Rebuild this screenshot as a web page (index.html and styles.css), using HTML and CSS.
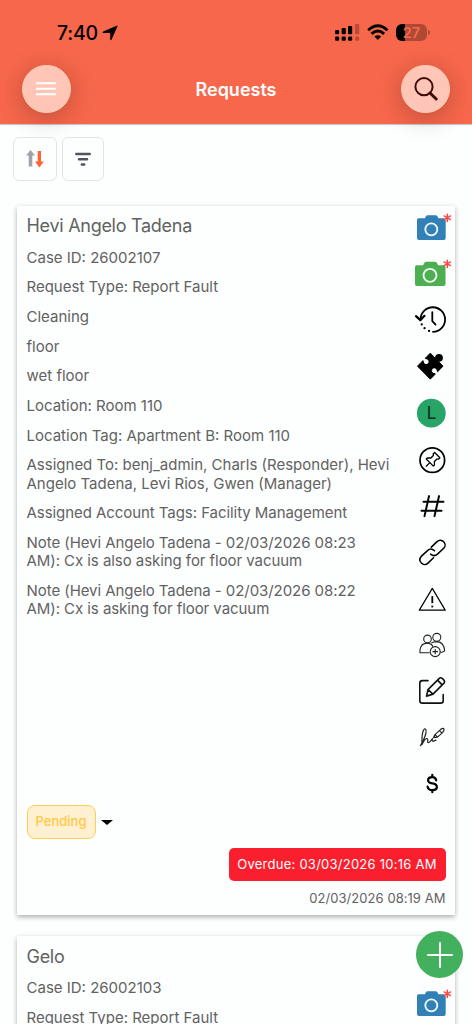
FILE: index.html
```html
<!DOCTYPE html>
<html lang="en">
<head>
<meta charset="utf-8">
<meta name="viewport" content="width=device-width, initial-scale=1">
<title>Requests</title>
<link rel="stylesheet" href="styles.css">
</head>
<body>
<svg width="0" height="0" class="defs" aria-hidden="true">
  <defs>
    <g id="asterisk" stroke="#fb4a45" stroke-width="1.5" stroke-linecap="round">
      <path d="M0-3.6V3.6M-3.2-1.9L3.2 1.9M3.2-1.9L-3.2 1.9"/>
    </g>
    <g id="camera-blue">
      <path d="M-13.3-10H-7.2L-6-12Q-5.500-13-4.300-13H3.700Q4.900-13 5.400-12L6.500-10H11.700Q13.700-10 13.700-8V9.800Q13.700 11.800 11.700 11.800H-13Q-15 11.800-15 9.800V-8.300Q-15-10-13.300-10Z" fill="#3180b6"/>
      <circle cx="-.7" cy="1.200" r="6" fill="none" stroke="#f2f9fd" stroke-width="1.800"/>
      <use href="#asterisk" x="15.300" y="-10.300"/>
    </g>
  </defs>
</svg>
<div class="screen">
  <header class="header">
    <div class="status">
      <div class="clock"><span>7:40</span>
        <svg width="16" height="16" viewBox="0 0 16 16"><path d="M14.600.7Q15.800.3 15.400 1.500L9.600 14.600Q8.800 15.900 8.200 14.500V8.400Q8.200 7.900 7.700 7.900H1.300Q-.3 7.300 1.200 6.500Z"/></svg>
      </div>
      <div class="signals">
        <svg width="25" height="18" viewBox="0 0 25 18"><g><rect x="0" y="6" width="4.200" height="4.300" rx="1"/><rect x="6.600" y="4" width="4.200" height="6.300" rx="1"/><rect x="13" y="2" width="4.200" height="8.300" rx="1"/><rect x="0" y="12.500" width="4.200" height="4.300" rx="1.200"/><rect x="6.600" y="12.500" width="4.200" height="4.300" rx="1.200"/><rect x="13" y="12.500" width="4.200" height="4.300" rx="1.200"/></g><g opacity=".25"><rect x="20" y="0" width="4.200" height="10.300" rx="1"/><rect x="20" y="12.500" width="4.200" height="4.300" rx="1.200"/></g></svg>
        <svg width="22" height="17" viewBox="0 0 22 17"><g fill="none" stroke="#000" stroke-width="2.900"><path d="M1.200 6.200Q10.800-2.600 20.400 6.200"/><path d="M4.500 9.800Q10.800 4.200 17.100 9.800"/></g><path d="M7.400 12.600Q10.800 9.800 14.200 12.600L10.800 16Z"/></svg>
        <div class="battery"><span>27</span></div>
      </div>
    </div>
    <div class="bar">
      <button class="round" aria-label="Menu"><svg width="20" height="14" viewBox="0 0 20 14" stroke="#fff" stroke-width="2"><path d="M0 1.200H20M0 6.700H20M0 12.300H20"/></svg></button>
      <h1>Requests</h1>
      <button class="round" aria-label="Search"><svg width="26" height="26" viewBox="0 0 26 26" fill="none" stroke="#3c0c08"><circle cx="11" cy="10.700" r="8.600" stroke-width="2"/><path d="M17 17L23.200 23" stroke-width="3" stroke-linecap="round"/></svg></button>
    </div>
  </header>
  <main>
    <div class="tools">
      <button class="tool sort" aria-label="Sort"><svg width="18" height="18" viewBox="0 0 18 18"><path d="M4.500 0L9 5.500H6.300V16.500H2.700V5.500H0Z" fill="#a0a2a8"/><path d="M11.700 1H15V11.500H17.800L13.400 17.600 9 11.500H11.700Z" fill="#ff6433"/></svg></button>
      <button class="tool" aria-label="Filter"><svg width="16" height="15" viewBox="0 0 16 15" fill="none" stroke="#50545d" stroke-width="2.500" stroke-linecap="round"><path d="M1.300 2H14.700M4 7.300H12M6.800 12.500H9.200"/></svg></button>
    </div>

    <article class="card">
      <div class="content">
        <div class="details">
          <h2>Hevi Angelo Tadena</h2>
          <p>Case ID: 26002107</p>
          <p>Request Type: Report Fault</p>
          <p>Cleaning</p>
          <p>floor</p>
          <p>wet floor</p>
          <p>Location: Room 110</p>
          <p>Location Tag: Apartment B: Room 110</p>
          <p>Assigned To: benj_admin, Charls (Responder), Hevi<br>Angelo Tadena, Levi Rios, Gwen (Manager)</p>
          <p class="snug">Assigned Account Tags: Facility Management</p>
          <p class="snug">Note (Hevi Angelo Tadena - 02/03/2026 08:23<br>AM): Cx is also asking for floor vacuum</p>
          <p class="snug">Note (Hevi Angelo Tadena - 02/03/2026 08:22<br>AM): Cx is asking for floor vacuum</p>
        </div>
        <div class="rail">
          <svg viewBox="-24 -23 48 46"><use href="#camera-blue"/></svg>
          <svg viewBox="-24 -23 48 46"><path d="M-15.300-8.800H-9L-7.500-11.300Q-7-12.300-5.800-12.300H3Q4.200-12.300 4.800-11.300L6.200-8.800H11.500Q13.500-8.800 13.500-6.800V9.800Q13.500 11.800 11.500 11.800H-15Q-17 11.800-17 9.800V-7Q-17-8.800-15.300-8.800Z" fill="#4caf50"/><circle cx="-2" cy="1.200" r="6.500" fill="none" stroke="#f2f9f2" stroke-width="1.900"/><use href="#asterisk" x="15.300" y="-10.300"/></svg>
          <svg viewBox="-24 -23 48 46" fill="none" stroke="#000" stroke-width="1.800" stroke-linecap="round" stroke-linejoin="round"><path d="M-11.500-1A12.300 12.300 0 1 1 1 11.700"/><path d="M-16-4L-11.700 0-7.500-4.300" stroke-width="2.200"/><path d="M.3-8V1L3.600 4.500"/><path d="M-3 10.800h.1M-7.500 8h.1M-10.300 4.300h.1" stroke-width="2.200"/></svg>
          <svg viewBox="-24 -23 48 46"><path d="M-14.500 0L-1.700-13 11 0-1.700 13Z" stroke="#000" stroke-linejoin="round"/><circle cx="7" cy="-8.300" r="3.900"/><path d="M2-4L6-8" stroke="#000" stroke-width="4"/><g fill="#fdfefe" stroke="#fdfefe"><circle cx="-5.800" cy="-4.500" r="2"/><path d="M-10-8.700L-6-4.700" stroke-width="2.600"/><circle cx="2.300" cy="4.500" r="2"/><path d="M2.300 4.500L6.500 8.700" stroke-width="2.600"/></g></svg>
          <svg viewBox="-24 -23 48 46"><circle cx="-.7" cy="0" r="14.400" fill="#27a566"/><text x="-.5" y="6" text-anchor="middle" class="initial">L</text></svg>
          <svg viewBox="-24 -23 48 46" fill="none" stroke="#000" stroke-width="1.300" stroke-linejoin="round"><circle cx=".3" cy="1" r="12.300" stroke-width="1.700"/><g transform="translate(.3 1) rotate(45)"><path d="M-3.700-7H3.700V-5L2.500-4V-.5L5 2V3.500H-5V2L-2.500-.5V-4L-3.700-5ZM0 3.500V9"/></g></svg>
          <svg viewBox="-24 -23 48 46" fill="none" stroke="#000" stroke-width="2" stroke-linecap="round"><path d="M-3-9L-7.500 11M7-9L2.500 11M-8.500-3.500H11.500M-10.500 5.500H9.500"/></svg>
          <svg viewBox="-24 -23 48 46" fill="none" stroke="#000" stroke-width="1.500" stroke-linecap="round"><path d="M-.7-4L5-9.500C9.500-14 16-7 11.700-2.800L5.500 3Q2 6-1.400 3M2.500-.3Q-1-3.800-4.500-.5L-10.500 5C-15 10-8.500 16.200-4 12L1.500 6.700"/></svg>
          <svg viewBox="-24 -23 48 46" fill="none" stroke="#000" stroke-width="1.200" stroke-linejoin="round"><path d="M.3-9.700L13.200 12H-12.700Z"/><path d="M.3-2V5" stroke-width="1.800"/><path d="M.3 7.500V9.300" stroke-width="1.800"/></svg>
          <svg viewBox="-24 -23 48 46" fill="none" stroke="#222" stroke-width="1.100"><circle cx="-4.500" cy="-5.200" r="3.800"/><circle cx="4.800" cy="-6.800" r="4"/><path d="M-2.500 8.600H-12V5.500Q-11-1-4.700-1 -1 -1 1 2.500M-.8-1Q1-2.500 5-2.500 12-2 12.700 6.800 11 8.300 8.300 8.300"/><circle cx="3.200" cy="7.500" r="5" fill="#fdfefe"/><path d="M3.200 4.800V10.200M.5 7.500H5.900"/></svg>
          <svg viewBox="-24 -23 48 46" fill="none" stroke="#111" stroke-width="1.600" stroke-linejoin="round" stroke-linecap="round"><path d="M-4-9.500H-9.500Q-12.200-9.500-12.200-7V10.500Q-12.200 13-9.500 13H8.500Q11.200 13 11.200 10.500V4.500"/><path d="M-5.500 6L-4-.5 7.300-11.800Q8.700-13 10.500-11.500L11.700-10.300Q13.300-8.500 12-7L1 4ZM-4-.5L1 4M5.500-10L10.200-5.300"/></svg>
          <svg viewBox="-24 -23 48 46" fill="none" stroke="#222" stroke-width="1.200" stroke-linecap="round" stroke-linejoin="round"><path d="M-11.500 9.500C-8 4-4.500-5-6.500-7-8.500-8.500-10.500-3-10 8.500-8.500 5-6.500 2-5 2.500-3 3-5.500 6.500-3.500 6.500-2 6.500-1 4 .5 2.500 0 4 0 5.500 1.500 5L4 4M1.500 1.500L3-1.500 9-7Q11.500-8.500 12-7 12.300-5.500 10.500-3.500L5.500 1ZM3-1.500L5.500 1M7.500-5.500L10-3"/></svg>
          <svg viewBox="-24 -23 48 46" fill="none" stroke="#000" stroke-width="2.200" stroke-linecap="round"><path d="M4.200-2.800Q3.500-6 .3-6 -3.900-6-3.900-3 -3.900-.4 .3.300 4.900 1 4.900 4 4.700 7 .5 7 -3.900 7-4.400 3.500M.3-8.300V-6.500M.3 7.500V9"/></svg>
        </div>
      </div>
      <div class="state"><span class="pill">Pending</span><i class="caret"></i></div>
      <div class="overdue">Overdue: 03/03/2026 10:16 AM</div>
      <div class="date">02/03/2026 08:19 AM</div>
    </article>

    <article class="card">
      <div class="content">
        <div class="details">
          <h2>Gelo</h2>
          <p>Case ID: 26002103</p>
          <p>Request Type: Report Fault</p>
        </div>
        <div class="rail">
          <svg viewBox="-24 -23 48 46"></svg>
          <svg viewBox="-24 -23 48 46"><use href="#camera-blue"/></svg>
        </div>
      </div>
    </article>
  </main>
  <button class="add" aria-label="Add"><svg width="26" height="26" viewBox="0 0 26 26" stroke="#fff" stroke-width="2" stroke-linecap="round"><path d="M13 1V25M1 13H25"/></svg></button>
</div>
</body>
</html>
```
FILE: styles.css
```css
* { box-sizing: border-box; }
body {
  margin: 0;
  font-family: Inter, "Liberation Sans", sans-serif;
  color: #626262;
  background: #fdfefe;
}
button { border: 0; padding: 0; font: inherit; }
svg { display: block; flex: none; }
.defs { position: absolute; }
.screen { position: relative; height: 1024px; overflow: hidden; }

.header {
  height: 124px;
  background: #f7674b;
  box-shadow: 0 1px 1px rgba(0, 0, 0, .2);
}
.status {
  height: 65px;
  padding: 0 42px 0 57px;
  display: flex;
  align-items: center;
  justify-content: space-between;
  color: #000;
}
.clock { display: flex; align-items: center; gap: 4px; font-size: 19.500px; font-weight: 500; letter-spacing: -.2px; }
.signals { display: flex; align-items: center; gap: 7px; }
.battery {
  position: relative;
  width: 31px;
  height: 17px;
  margin-right: 3px;
  border-radius: 6px;
  background: linear-gradient(90deg, #000 8.500px, #ae4936 8.500px);
  color: #f7674b;
  font-size: 14.500px;
  font-weight: 600;
  line-height: 17px;
  text-align: center;
}
.battery::after {
  content: "";
  position: absolute;
  left: 32px;
  top: 6px;
  width: 2px;
  height: 5px;
  border-radius: 0 2px 2px 0;
  background: #ae4936;
}
.bar { padding: 0 22px; display: flex; align-items: center; justify-content: space-between; height: 48px; }
.bar h1 { margin: 0; font-size: 18px; font-weight: 600; color: #fff; }
.round {
  width: 48.500px;
  height: 48.500px;
  border-radius: 50%;
  display: flex;
  align-items: center;
  justify-content: center;
  background: #ffc5b7;
  border: 1px solid #fbcdb2;
  box-shadow: 0 5px 26px rgba(0, 0, 0, .23);
}

.tools { display: flex; gap: 5px; padding: 13px 0 0 13px; }
.tool {
  width: 41.500px;
  height: 44px;
  display: flex;
  align-items: center;
  justify-content: center;
  border: 1.500px solid #e3e4e5;
  border-radius: 6px;
  background: #fdfefe;
}
.tool.sort { width: 44px; }

.card {
  height: 709px;
  margin: 24.500px 17.500px 0 17px;
  background: #fdfefe;
  box-shadow: 0 2px 5px rgba(0, 0, 0, .32);
}
.card + .card { margin-top: 21.500px; }
.content { display: flex; justify-content: space-between; height: 600px; padding-left: 9.500px; }
.details { padding-top: 9.500px; white-space: nowrap; }
.details h2 { margin: 0 0 11.500px; font-size: 18px; letter-spacing: -.28px; line-height: 22px; font-weight: 400; }
.details p { margin: 0 0 11.500px; font-size: 15px; line-height: 18.200px; }
.details .snug { letter-spacing: -.06px; }
.rail { width: 46.500px; display: flex; flex-direction: column; margin-top: -1px; }
.rail svg { width: 48px; height: 46.250px; overflow: visible; }
.initial { font-size: 17px; fill: #06291a; }

.state { display: flex; align-items: center; gap: 5px; padding-left: 9.500px; height: 33px; }
.pill {
  width: 69px;
  height: 33.500px;
  line-height: 31px;
  text-align: center;
  border: 1.500px solid #ffd152;
  border-radius: 8px;
  background: #fff0d2;
  color: #ffc941;
  font-size: 13px;
  font-weight: 500;
}
.caret { border: 6px solid transparent; border-top: 5px solid #000; border-bottom: 0; }
.overdue {
  width: 217px;
  height: 33px;
  margin: 9px 9px 0 auto;
  border-radius: 5px;
  background: #fa1f2e;
  color: #fff;
  font-size: 13px;
  letter-spacing: .25px;
  line-height: 33px;
  text-align: center;
  white-space: nowrap;
}
.date { margin: 8px 9px 0 0; text-align: right; font-size: 13px; letter-spacing: .05px; line-height: 18px; }

.add {
  position: absolute;
  left: 416px;
  top: 931px;
  width: 47px;
  height: 47px;
  border-radius: 50%;
  background: #42b05c;
  display: flex;
  align-items: center;
  justify-content: center;
}
```
